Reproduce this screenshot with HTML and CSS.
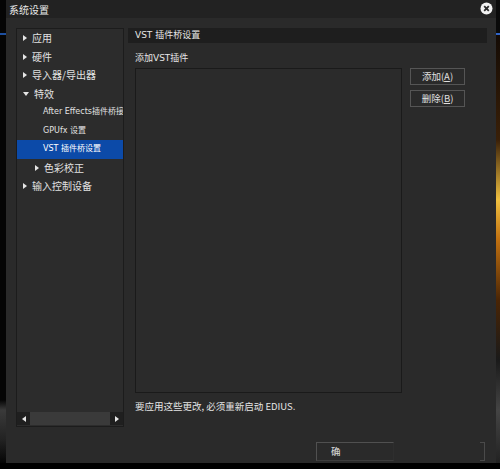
FILE: index.html
```html
<!DOCTYPE html>
<html>
    <head>
        <link rel="stylesheet" href="styles.css">
    </head>

    <body>
        <div class="desktop">
            <div class="edge-left"></div>

            <div class="dialog">
                <div class="titlebar">
                    <span class="title">系统设置</span>
                    <span class="close-btn">
                        <svg width="13" height="13" viewBox="0 0 13 13">
                            <circle cx="6.5" cy="6.5" r="6" fill="#f2f2f2"/>
                            <path d="M4.2 4.2 L8.8 8.8 M8.8 4.2 L4.2 8.8" stroke="#2a2a2a" stroke-width="1.8"/>
                        </svg>
                    </span>
                </div>

                <div class="body">
                    <div class="tree-panel">
                        <ul class="tree">
                            <li class="lvl0"><span class="arrow right"></span>应用</li>
                            <li class="lvl0"><span class="arrow right"></span>硬件</li>
                            <li class="lvl0"><span class="arrow right"></span>导入器/导出器</li>
                            <li class="lvl0"><span class="arrow down"></span>特效</li>
                            <li class="lvl1 latin">After Effects插件桥接</li>
                            <li class="lvl1 latin">GPUfx 设置</li>
                            <li class="lvl1 latin selected">VST 插件桥设置</li>
                            <li class="lvl1b"><span class="arrow right"></span>色彩校正</li>
                            <li class="lvl0"><span class="arrow right"></span>输入控制设备</li>
                        </ul>
                        <div class="hscroll">
                            <span class="scroll-btn"><span class="arrow left"></span></span>
                            <span class="scroll-thumb"></span>
                            <span class="scroll-gap"></span>
                            <span class="scroll-btn"><span class="arrow right"></span></span>
                        </div>
                    </div>

                    <div class="settings">
                        <div class="section-header">VST 插件桥设置</div>
                        <div class="section-body">
                            <div class="label">添加VST插件</div>
                            <div class="list-row">
                                <div class="plugin-list"></div>
                                <div class="side-buttons">
                                    <button class="btn">添加(<u>A</u>)</button>
                                    <button class="btn">删除(<u>B</u>)</button>
                                </div>
                            </div>
                            <div class="note">要应用这些更改, 必须重新启动 EDIUS.</div>
                        </div>
                    </div>
                </div>

                <div class="footer">
                    <button class="ok-btn">确</button>
                    <span class="ghost-btn"></span>
                </div>
            </div>

            <div class="edge-right"></div>
        </div>
    </body>
</html>
```

FILE: styles.css
```css
body {
    margin: 0;
    padding: 0;
    background-color: #000;
    font-family: "DejaVu Sans", "Noto Sans CJK SC", sans-serif;
    font-size: 10px;
    color: #dcdcdc;
    width: 500px;
    height: 469px;
    overflow: hidden;
}

.desktop {
    display: flex;
    height: 463px;
}

.edge-left {
    width: 6px;
    background: linear-gradient(to bottom, #050505 0, #050505 33px, #1d4fa0 33px, #1d4fa0 35px, #050505 35px, #050505 400px, #3a3a3a 410px, #222 440px, #050505 463px);
}

.edge-right {
    width: 4px;
    background: linear-gradient(to bottom, #0a0a0a 0, #0a0a0a 33px, #2f64c8 33px, #2f64c8 35px, #140b05 35px, #3a2008 140px, #f0c040 200px, #c07010 240px, #4a2505 300px, #1a1a1a 360px, #444 410px, #222 463px);
}

.dialog {
    width: 490px;
    background-color: #2a2a2a;
    display: flex;
    flex-direction: column;
}

.titlebar {
    height: 18px;
    background-color: #222;
    display: flex;
    align-items: center;
    justify-content: space-between;
    padding: 0 3px 0 3px;
}

.title {
    font-family: "Noto Sans CJK SC", sans-serif;
    font-size: 10px;
    color: #e8e8e8;
}

.close-btn {
    display: flex;
    margin-top: -1px;
}

.body {
    display: flex;
    padding: 10px 8px 0 10px;
    gap: 4px;
}

.tree-panel {
    width: 106px;
    height: 397px;
    background-color: #2c2c2c;
    border: 1px solid #1c1c1c;
    display: flex;
    flex-direction: column;
}

.tree {
    list-style: none;
    margin: 0;
    padding: 0;
    flex: 1;
}

.tree li {
    height: 18.5px;
    line-height: 18.5px;
    display: flex;
    align-items: center;
    font-family: "Noto Sans CJK SC", sans-serif;
    font-size: 10px;
    color: #e2e2e2;
    white-space: nowrap;
    overflow: hidden;
}

.tree li.latin {
    font-family: "DejaVu Sans", "Noto Sans CJK SC", sans-serif;
    font-size: 8px;
}

.lvl0 {
    padding-left: 6px;
}

.lvl1 {
    padding-left: 26px;
}

.lvl1b {
    padding-left: 18px;
}

.tree li.selected {
    background-color: #0c4aa8;
    color: #fff;
}

.arrow {
    display: inline-block;
    width: 0;
    height: 0;
    margin-right: 5px;
}

.arrow.right {
    border-top: 3px solid transparent;
    border-bottom: 3px solid transparent;
    border-left: 4px solid #e6e6e6;
}

.arrow.left {
    border-top: 3px solid transparent;
    border-bottom: 3px solid transparent;
    border-right: 4px solid #e6e6e6;
}

.arrow.down {
    border-left: 3px solid transparent;
    border-right: 3px solid transparent;
    border-top: 4px solid #e6e6e6;
}

.hscroll {
    height: 13px;
    display: flex;
    background-color: #2c2c2c;
    margin-bottom: 1px;
}

.scroll-btn {
    width: 13px;
    background-color: #1f1f1f;
    display: flex;
    align-items: center;
    justify-content: center;
}

.scroll-btn .arrow {
    margin: 0;
}

.scroll-thumb {
    width: 80px;
    background-color: #3a3a3a;
}

.scroll-gap {
    flex: 1;
}

.settings {
    flex: 1;
}

.section-header {
    height: 15px;
    line-height: 15px;
    background-color: #1e1e1e;
    padding-left: 7px;
    font-family: "DejaVu Sans", "Noto Sans CJK SC", sans-serif;
    font-size: 9px;
    color: #e6e6e6;
    margin-right: 1px;
}

.section-body {
    padding-left: 7px;
}

.label {
    margin-top: 8px;
    height: 14px;
    line-height: 14px;
    font-family: "DejaVu Sans", "Noto Sans CJK SC", sans-serif;
    font-size: 9px;
    color: #e6e6e6;
}

.list-row {
    display: flex;
    margin-top: 3px;
    gap: 8px;
}

.plugin-list {
    width: 265px;
    height: 323px;
    border: 1px solid #1a1a1a;
    background-color: #2b2b2b;
}

.side-buttons {
    display: flex;
    flex-direction: column;
    gap: 5px;
}

.btn {
    width: 55px;
    height: 17px;
    padding: 0;
    border: 1px solid #555;
    background-color: #2a2a2a;
    color: #e0e0e0;
    font-family: "Noto Sans CJK SC", sans-serif;
    font-size: 9.5px;
    line-height: 15px;
}

.note {
    margin-top: 6px;
    font-family: "Noto Sans CJK SC", sans-serif;
    font-size: 9.5px;
    color: #e6e6e6;
}

.footer {
    margin-top: auto;
    height: 20px;
    margin-bottom: 2px;
    display: flex;
    align-items: center;
    padding-left: 310px;
}

.ok-btn {
    width: 78px;
    height: 19px;
    padding: 0 0 0 14px;
    text-align: left;
    border: 1px solid #505050;
    border-right-color: #2e2e2e;
    border-bottom-color: #3c3c3c;
    background-color: #2a2a2a;
    color: #e0e0e0;
    font-family: "Noto Sans CJK SC", sans-serif;
    font-size: 9.5px;
}

.ghost-btn {
    width: 4px;
    height: 17px;
    margin-left: 86px;
    border: 1px solid #4a4a4a;
    border-left: none;
}
```
